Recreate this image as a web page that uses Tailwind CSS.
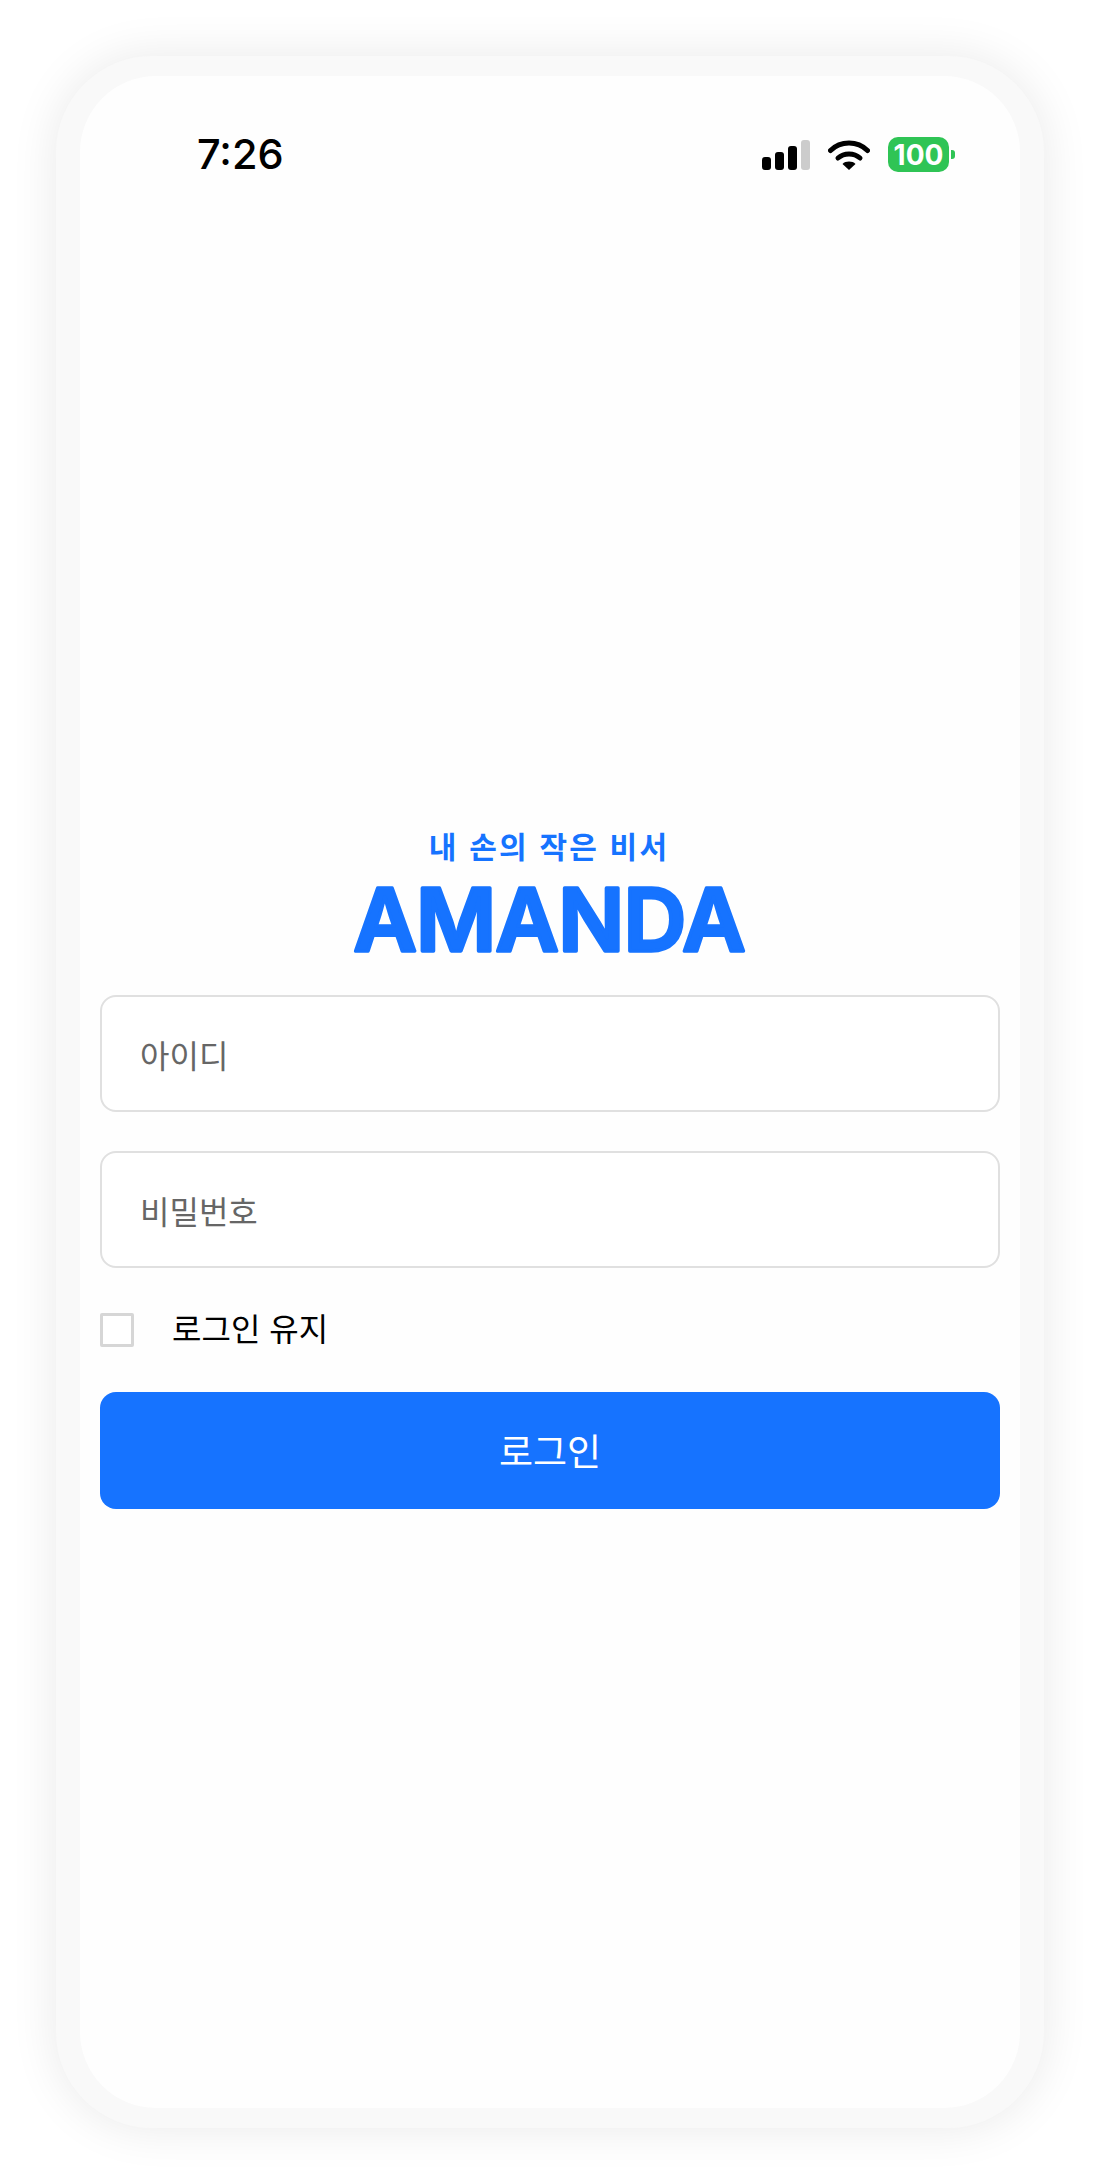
<!DOCTYPE html>
<html lang="ko">
<head>
    <meta charset="UTF-8">
    <meta name="viewport" content="width=device-width, initial-scale=1.0">
    <title>AMANDA</title>
    <script src="https://cdn.jsdelivr.net/npm/@tailwindcss/browser@4"></script>
</head>
<body class="bg-white font-['Noto_Sans_CJK_KR','Noto_Sans',sans-serif]">
    <div class="w-[1100px] h-[2184px] pt-[56px] pl-[56px]">
        <div class="w-[988px] h-[2072px] pt-[20px] px-[24px] bg-[#f9f9f9] rounded-[96px] shadow-[0_0_48px_rgba(0,0,0,0.09)]">
            <div class="w-[940px] h-[2032px] bg-[#fefefe] rounded-[76px] px-[20px] flex flex-col">
                <!-- status bar -->
                <div class="flex items-center justify-between h-[35px] mt-[61px] pl-[97px] pr-[45px]">
                    <span class="font-['Inter',sans-serif] font-medium text-[41.500px] leading-[35px] text-black">7:26</span>
                    <div class="flex items-end">
                        <div class="flex items-end gap-[4px] h-[30px] mb-[2px]">
                            <div class="w-[9px] h-[13px] rounded-[3px] bg-black"></div>
                            <div class="w-[9px] h-[18px] rounded-[3px] bg-black"></div>
                            <div class="w-[9px] h-[24px] rounded-[3px] bg-black"></div>
                            <div class="w-[9px] h-[30px] rounded-[3px] bg-[#cccccc]"></div>
                        </div>
                        <svg class="ml-[18px] mb-[2px]" width="42" height="31" viewBox="0 0 42 31" fill="none">
                            <path d="M2.5 11.5C12.5 1.5 29.5 1.5 39.5 11.5" stroke="#000" stroke-width="5" stroke-linecap="round"/>
                            <path d="M10 19C16 13.5 26 13.5 32 19" stroke="#000" stroke-width="5" stroke-linecap="round"/>
                            <path d="M14.5 25C17.5 21.8 24.5 21.8 27.5 25L21 31Z" fill="#000"/>
                        </svg>
                        <div class="ml-[18px] w-[61px] h-[35px] rounded-[10px] bg-[#2fc455] flex items-center justify-center font-['Inter',sans-serif] font-bold text-[28px] leading-none text-white">100</div>
                        <div class="ml-[2px] mb-[13px] w-[4px] h-[9px] rounded-r-[3px] bg-[#2fc455]"></div>
                    </div>
                </div>

                <!-- logo -->
                <div class="mt-[658px] flex flex-col items-center">
                    <p class="text-[30px] leading-[30px] font-bold tracking-[2.2px] text-[#1673ff] -ml-[2px]">내 손의 작은 비서</p>
                    <svg class="-ml-[1px] overflow-visible" width="420" height="96" viewBox="0 0 420 96">
                        <text x="13.500" y="91" textLength="392" lengthAdjust="spacing" font-family="Inter, sans-serif" font-weight="600" font-size="87" fill="#1673ff" stroke="#1673ff" stroke-width="3.500" stroke-linejoin="round">AMANDA</text>
                    </svg>
                </div>

                <!-- login form -->
                <input type="text" placeholder="아이디" class="mt-[39px] w-full h-[117px] pl-[38px] bg-white border-2 border-[#e0e0e0] rounded-[16px] text-[32px] outline-none placeholder:text-[#666666]">
                <input type="password" placeholder="비밀번호" class="mt-[39px] w-full h-[117px] pl-[38px] bg-white border-2 border-[#e0e0e0] rounded-[16px] text-[32px] outline-none placeholder:text-[#666666]">
                <label class="mt-[45px] flex items-center">
                    <input type="checkbox" class="appearance-none w-[34px] h-[34px] bg-white border-[3px] border-[#d6d6d6] rounded-[2px]">
                    <span class="ml-[38px] -mt-[6px] text-[32px] leading-[34px] text-black">로그인 유지</span>
                </label>
                <button class="mt-[45px] w-full h-[117px] bg-[#1673ff] rounded-[16px] text-[37px] text-white">로그인</button>
            </div>
        </div>
    </div>
</body>
</html>
